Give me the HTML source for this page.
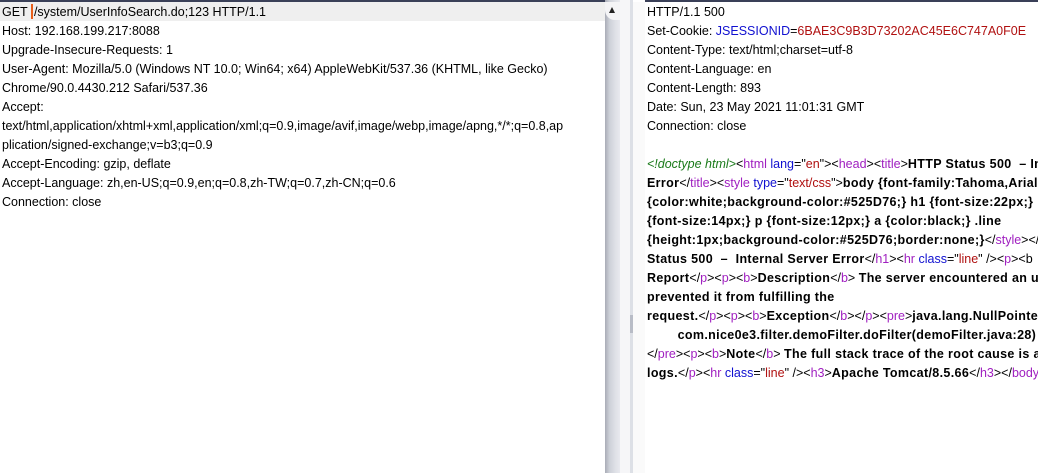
<!DOCTYPE html>
<html><head><style>
body{margin:0;width:1038px;height:473px;background:#fff;position:relative;overflow:hidden;font-family:"Liberation Sans",sans-serif;font-size:12.5px;color:#000}
.topl{position:absolute;left:0;top:0;width:605px;height:2px;background:#3a4058}
.topr{position:absolute;left:645px;top:0;width:393px;height:2px;background:#3a4058}
.hl{position:absolute;left:0;top:2px;width:605px;height:19px;background:#efefef}
.sb{position:absolute;left:605px;top:0;width:15px;height:473px;background:linear-gradient(90deg,#a9acb6,#cdd0d8 30%,#dfe1e7 70%,#e8e9ee)}
.sbt{position:absolute;left:605px;top:2px;width:15px;height:18px;background:#f4f4f6;border-radius:0 0 0 10px}
.arr{position:absolute;left:609px;top:7px;width:0;height:0;border-left:3.5px solid transparent;border-right:3.5px solid transparent;border-bottom:6px solid #222}
.gap{position:absolute;left:620px;top:0;width:10px;height:473px;background:#f6f6f8}
.spl{position:absolute;left:630px;top:0;width:3px;height:473px;background:#dde0e6}
.grip{position:absolute;left:630px;top:315px;width:3px;height:18px;background:#b8bcc6}
.mr{position:absolute;left:633px;top:2px;width:12px;height:471px;background:#fafafa}
.pane{position:absolute;top:3px;line-height:19px;white-space:pre;overflow:hidden}
.l{left:2px;width:600px}.r{left:647px;width:391px}
.cur{display:inline-block;width:2px;height:15px;background:#e8601c;vertical-align:-3px;margin-right:1px}
.b{font-weight:bold;letter-spacing:0.35px}.g{color:#1a7a1a;font-style:italic}.p{color:#a020c0}.bl{color:#1010d0}.rd{color:#b01010}
</style></head><body>
<div class="hl"></div>
<div class="topl"></div><div class="topr"></div>
<div class="sb"></div><div class="sbt"></div><div class="arr"></div>
<div class="gap"></div><div class="spl"></div><div class="grip"></div><div class="mr"></div>
<div class="pane l">GET <span class="cur"></span>/system/UserInfoSearch.do;123 HTTP/1.1
Host: 192.168.199.217:8088
Upgrade-Insecure-Requests: 1
User-Agent: Mozilla/5.0 (Windows NT 10.0; Win64; x64) AppleWebKit/537.36 (KHTML, like Gecko)
Chrome/90.0.4430.212 Safari/537.36
Accept:
text/html,application/xhtml+xml,application/xml;q=0.9,image/avif,image/webp,image/apng,*/*;q=0.8,ap
plication/signed-exchange;v=b3;q=0.9
Accept-Encoding: gzip, deflate
Accept-Language: zh,en-US;q=0.9,en;q=0.8,zh-TW;q=0.7,zh-CN;q=0.6
Connection: close</div>
<div class="pane r">HTTP/1.1 500
Set-Cookie: <span class="bl">JSESSIONID</span>=<span class="rd">6BAE3C9B3D73202AC45E6C747A0F0E</span>
Content-Type: text/html;charset=utf-8
Content-Language: en
Content-Length: 893
Date: Sun, 23 May 2021 11:01:31 GMT
Connection: close

<span class="g">&lt;!doctype html&gt;</span>&lt;<span class="p">html</span> <span class="bl">lang</span>="<span class="rd">en</span>"&gt;&lt;<span class="p">head</span>&gt;&lt;<span class="p">title</span>&gt;<span class="b">HTTP Status 500  – Internal Server</span>
<span class="b">Error</span>&lt;/<span class="p">title</span>&gt;&lt;<span class="p">style</span> <span class="bl">type</span>="<span class="rd">text/css</span>"&gt;<span class="b">body {font-family:Tahoma,Arial}</span>
<span class="b">{color:white;background-color:#525D76;} h1 {font-size:22px;} h2</span>
<span class="b">{font-size:14px;} p {font-size:12px;} a {color:black;} .line</span>
<span class="b">{height:1px;background-color:#525D76;border:none;}</span>&lt;/<span class="p">style</span>&gt;&lt;/
<span class="b">Status 500  –  Internal Server Error</span>&lt;/<span class="p">h1</span>&gt;&lt;<span class="p">hr</span> <span class="bl">class</span>="<span class="rd">line</span>" /&gt;&lt;<span class="p">p</span>&gt;&lt;b
<span class="b">Report</span>&lt;/<span class="p">p</span>&gt;&lt;<span class="p">p</span>&gt;&lt;<span class="p">b</span>&gt;<span class="b">Description</span>&lt;/<span class="p">b</span>&gt; <span class="b">The server encountered an unexpected</span>
<span class="b">prevented it from fulfilling the</span>
<span class="b">request.</span>&lt;/<span class="p">p</span>&gt;&lt;<span class="p">p</span>&gt;&lt;<span class="p">b</span>&gt;<span class="b">Exception</span>&lt;/<span class="p">b</span>&gt;&lt;/<span class="p">p</span>&gt;&lt;<span class="p">pre</span>&gt;<span class="b">java.lang.NullPointerException</span>
<span class="b">        com.nice0e3.filter.demoFilter.doFilter(demoFilter.java:28)</span>
&lt;/<span class="p">pre</span>&gt;&lt;<span class="p">p</span>&gt;&lt;<span class="p">b</span>&gt;<span class="b">Note</span>&lt;/<span class="p">b</span>&gt; <span class="b">The full stack trace of the root cause is available</span>
<span class="b">logs.</span>&lt;/<span class="p">p</span>&gt;&lt;<span class="p">hr</span> <span class="bl">class</span>="<span class="rd">line</span>" /&gt;&lt;<span class="p">h3</span>&gt;<span class="b">Apache Tomcat/8.5.66</span>&lt;/<span class="p">h3</span>&gt;&lt;/<span class="p">body</span>&gt;</div>
</body></html>
